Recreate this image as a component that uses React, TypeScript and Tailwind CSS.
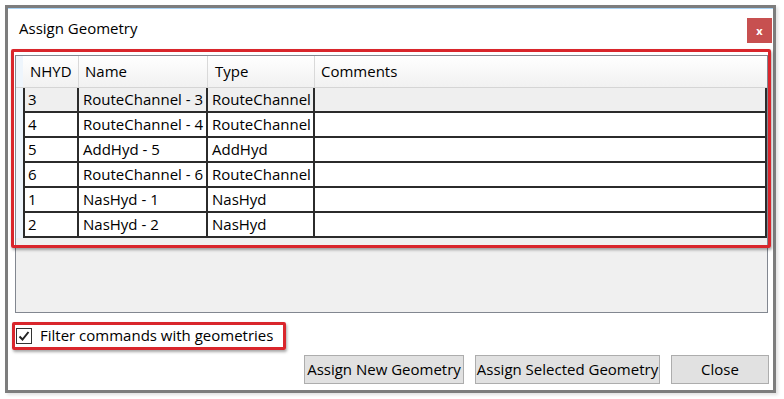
import React from 'react';

const rows = [
  { id: '3', name: 'RouteChannel - 3', type: 'RouteChannel', first: true },
  { id: '4', name: 'RouteChannel - 4', type: 'RouteChannel' },
  { id: '5', name: 'AddHyd - 5', type: 'AddHyd' },
  { id: '6', name: 'RouteChannel - 6', type: 'RouteChannel' },
  { id: '1', name: 'NasHyd - 1', type: 'NasHyd' },
  { id: '2', name: 'NasHyd - 2', type: 'NasHyd' },
];

function Btn({ label, w }: { label: string; w: string }) {
  return (
    <button className={`${w} h-[29px] bg-[#e1e1e1] border border-[#adadad] text-[15px] text-black leading-none whitespace-nowrap`}>
      {label}
    </button>
  );
}

export default function App() {
  return (
    <div className="w-[784px] h-[399px] bg-white pt-[5px] pl-[5px] overflow-hidden" style={{ fontFamily: '"Open Sans", sans-serif' }}>
      <div className="relative w-[771px] h-[388px] border-[3px] border-[#7d7d7d] bg-white flex flex-col shadow-[2px_2px_3px_rgba(0,0,0,0.12)]">
        <div className="h-px bg-[#a9d3f5]" />
        {/* title bar */}
        <div className="flex items-start justify-between h-[46px]">
          <div className="pl-[11px] pt-[9px] text-[15px] text-black leading-5">Assign Geometry</div>
          <div className="mt-[9px] mr-[1px] w-[25px] h-[25px] bg-[#c75050] flex items-center justify-center text-white text-[11px] font-bold leading-none">x</div>
        </div>

        {/* grid panel */}
        <div className="ml-[7px] w-[753px] h-[258px] border border-[#828790] bg-[#f0f0f0] flex flex-col">
          <div className="flex h-[32px] bg-gradient-to-b from-white to-[#f1f1f1] border-b border-[#d5d5d5]">
            <div className="w-[7px] bg-[#eef5fc]" />
            <div className="w-[56px] pl-[7px] flex items-center text-[15px] border-r border-[#d9d9d9]">NHYD</div>
            <div className="w-[129px] pl-[6px] flex items-center text-[15px] border-r border-[#d9d9d9]">Name</div>
            <div className="w-[107px] pl-[7px] flex items-center text-[15px] border-r border-[#d9d9d9]">Type</div>
            <div className="flex-1 pl-[6px] flex items-center text-[15px]">Comments</div>
          </div>
          {rows.map((r) => (
            <div key={r.id} className="flex h-[25px]">
              <div className="w-[7px] bg-[#eef5fc]" />
              <div className={`flex w-[744px] border-l-2 border-r-2 border-b-2 border-[#2b2b2b] ${r.first ? 'bg-[#efefef]' : 'bg-white'}`}>
                <div className="w-[54px] pl-[3px] flex items-center text-[15px] border-r-2 border-[#2b2b2b]">{r.id}</div>
                <div className="w-[129px] pl-[4px] flex items-center text-[15px] border-r-2 border-[#2b2b2b] whitespace-nowrap">{r.name}</div>
                <div className="w-[107px] pl-[4px] flex items-center text-[15px] border-r-2 border-[#2b2b2b] whitespace-nowrap">{r.type}</div>
                <div className="flex-1" />
              </div>
            </div>
          ))}
        </div>

        {/* checkbox */}
        <div className="flex items-center ml-[8px] mt-[14px] h-[17px]">
          <div className="w-[16px] h-[16px] border border-[#333] bg-white flex items-center justify-center">
            <svg width="12" height="12" viewBox="0 0 12 12">
              <path d="M1.5 6.5 L4.5 9.5 L10.5 2" fill="none" stroke="#222" strokeWidth="2" />
            </svg>
          </div>
          <span className="ml-[8px] text-[15px] text-black leading-none">Filter commands with geometries</span>
        </div>

        {/* buttons */}
        <div className="flex justify-end gap-[11px] mt-[11px] mr-[4px]">
          <Btn label="Assign New Geometry" w="w-[160px]" />
          <Btn label="Assign Selected Geometry" w="w-[185px]" />
          <Btn label="Close" w="w-[98px]" />
        </div>

        {/* annotation boxes */}
        <div className="absolute left-[3px] top-[41px] w-[760px] h-[199px] border-[3px] border-[#d9262c] rounded-[2px] shadow-[1px_2px_3px_rgba(0,0,0,0.35)] pointer-events-none" />
        <div className="absolute left-[4px] top-[314px] w-[274px] h-[28px] border-[3px] border-[#d9262c] rounded-[2px] shadow-[1px_2px_3px_rgba(0,0,0,0.35)] pointer-events-none" />
      </div>
    </div>
  );
}
